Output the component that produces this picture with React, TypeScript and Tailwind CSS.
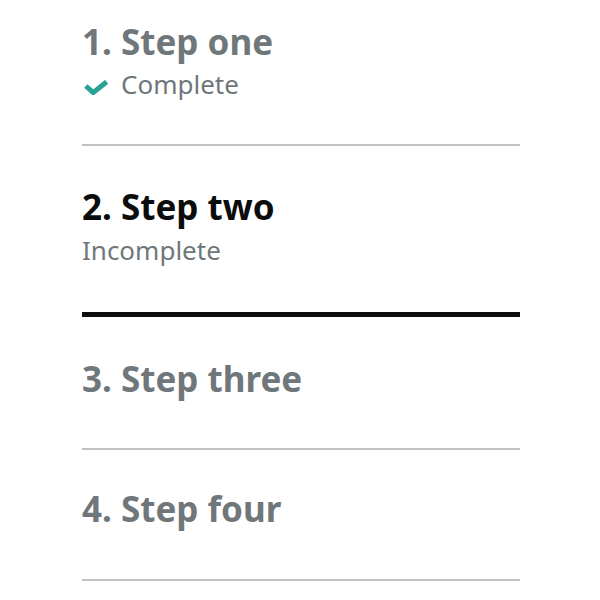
import React from "react";

const font = { fontFamily: '"Noto Sans", "Liberation Sans", sans-serif' };

export default function App() {
  return (
    <div className="min-h-[600px] bg-white" style={font}>
      <div className="ml-[82px] w-[438px]">
        <section className="pt-[22px] pb-[44px] border-b-2 border-[#bfc1c3]">
          <h2 className="text-[35px] leading-[40px] font-bold text-[#6f777b]">1. Step one</h2>
          <div className="mt-[6px] flex items-start h-[32px]">
            <svg className="ml-[2px] mr-[13px] mt-[12px]" width="24" height="15" viewBox="0 0 24 15">
              <path d="M1.8 6 L9.2 12.6 L22.6 1.8" fill="none" stroke="#28a197" strokeWidth="5" />
            </svg>
            <span className="text-[26px] leading-[32px] text-[#6f777b]">Complete</span>
          </div>
        </section>
        <section className="pt-[41px] pb-[46px] border-b-[5px] border-[#0b0c0c]">
          <h2 className="text-[35px] leading-[40px] font-bold text-[#0b0c0c]">2. Step two</h2>
          <div className="mt-[7px] text-[26px] leading-[32px] text-[#6f777b]">Incomplete</div>
        </section>
        <section className="pt-[42px] pb-[49px] border-b-2 border-[#bfc1c3]">
          <h2 className="text-[35px] leading-[40px] font-bold text-[#6f777b]">3. Step three</h2>
        </section>
        <section className="pt-[39px] pb-[50px] border-b-2 border-[#bfc1c3]">
          <h2 className="text-[35px] leading-[40px] font-bold text-[#6f777b]">4. Step four</h2>
        </section>
      </div>
    </div>
  );
}
